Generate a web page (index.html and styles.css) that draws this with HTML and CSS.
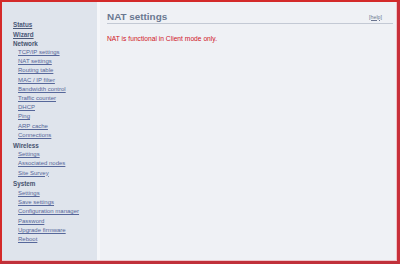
FILE: index.html
```html
<!DOCTYPE html>
<html>
<head>
<meta charset="utf-8">
<link rel="stylesheet" href="styles.css">
</head>
<body>
<div class="frame">
  <nav class="sidebar">
    <a class="head link" href="#">Status</a>
    <a class="head link" href="#">Wizard</a>
    <div class="head">Network</div>
    <a class="sub" href="#">TCP/IP settings</a>
    <a class="sub" href="#">NAT settings</a>
    <a class="sub" href="#">Routing table</a>
    <a class="sub" href="#">MAC / IP filter</a>
    <a class="sub" href="#">Bandwidth control</a>
    <a class="sub" href="#">Traffic counter</a>
    <a class="sub" href="#">DHCP</a>
    <a class="sub" href="#">Ping</a>
    <a class="sub" href="#">ARP cache</a>
    <a class="sub" href="#">Connections</a>
    <div class="head sect">Wireless</div>
    <a class="sub" href="#">Settings</a>
    <a class="sub" href="#">Associated nodes</a>
    <a class="sub" href="#">Site Survey</a>
    <div class="head sect">System</div>
    <a class="sub first" href="#">Settings</a>
    <a class="sub" href="#">Save settings</a>
    <a class="sub" href="#">Configuration manager</a>
    <a class="sub" href="#">Password</a>
    <a class="sub" href="#">Upgrade firmware</a>
    <a class="sub" href="#">Reboot</a>
  </nav>
  <div class="divider"></div>
  <main class="main">
    <div class="titlebar">
      <h1 class="title">NAT settings</h1>
      <a class="help" href="#">[help]</a>
    </div>
    <p class="notice">NAT is functional in Client mode only.</p>
  </main>
</div>
</body>
</html>
```
FILE: styles.css
```css
html, body {
  margin: 0;
  padding: 0;
  width: 400px;
  height: 264px;
  overflow: hidden;
  background: #d42a2a;
  font-family: "Liberation Sans", Arial, sans-serif;
}
.frame {
  box-sizing: border-box;
  width: 400px;
  height: 264px;
  border-top: 2px solid #d42a2a;
  border-left: 2px solid #d42a2a;
  border-right: 3px solid #c8303a;
  border-bottom: 3px solid #c0303a;
  display: flex;
  background: #eff1f5;
  box-shadow: inset -1px -1px 0 #efc4c8;
}
.sidebar {
  width: 95px;
  flex: none;
  background: #dfe4ec;
  padding-top: 18.4px;
  display: flex;
  flex-direction: column;
  font-size: 6px;
  line-height: 9.2px;
  margin-bottom: 1px;
}
.sidebar a, .sidebar div {
  display: block;
  white-space: nowrap;
}
.head {
  padding-left: 11px;
  font-weight: bold;
  font-size: 6.3px;
  color: #46536e;
}
.head.link {
  color: #4a5878;
  text-decoration: underline;
}
.sect {
  margin-top: 1px;
}
.sub {
  padding-left: 16px;
  color: #56679a;
  text-decoration: underline;
}
.sub.first {
  margin-top: 1px;
}
.divider {
  width: 3px;
  flex: none;
  background: #f5f6f9;
  margin-bottom: 1px;
}
.main {
  flex: 1;
  padding: 7px 3px 0 7px;
  margin-bottom: 1px;
  margin-right: 1px;
}
.titlebar {
  display: flex;
  justify-content: space-between;
  align-items: flex-end;
  border-bottom: 1px solid #c3c9d4;
  height: 13.5px;
}
.title {
  margin: 0;
  font-size: 9.9px;
  line-height: 13px;
  font-weight: bold;
  color: #6a7891;
}
.help {
  font-size: 5.3px;
  line-height: 7px;
  color: #6b7590;
  text-decoration: underline;
  margin-right: 11px;
  margin-bottom: 2px;
}
.notice {
  margin: 11px 0 0 0;
  font-size: 6.7px;
  line-height: 8px;
  color: #d0141e;
}
```
